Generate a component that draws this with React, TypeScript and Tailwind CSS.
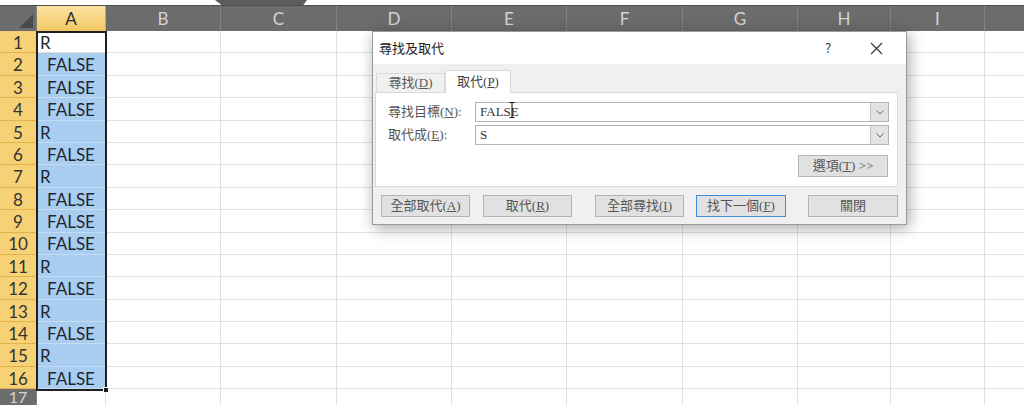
import React from "react";

const cols = [
   { label: "A", cls: "w-[69px]" },
   { label: "B", cls: "w-[115px]" },
   { label: "C", cls: "w-[116px]" },
   { label: "D", cls: "w-[115px]" },
   { label: "E", cls: "w-[115px]" },
   { label: "F", cls: "w-[116px]" },
   { label: "G", cls: "w-[115px]" },
   { label: "H", cls: "w-[93px]" },
   { label: "I", cls: "w-[94px]" },
   { label: "", cls: "w-[60px]" },
];

const values = [
   "R", "FALSE", "FALSE", "FALSE", "R", "FALSE", "R", "FALSE",
   "FALSE", "FALSE", "R", "FALSE", "R", "FALSE", "R", "FALSE",
];

const cellFont = "font-['Lato','Liberation_Sans',sans-serif]";
const dlgFont = "font-['Liberation_Serif','Noto_Sans_CJK_TC',serif]";

function Btn({
   children,
   className = "",
   focused = false,
}: {
   children: React.ReactNode;
   className?: string;
   focused?: boolean;
}) {
   return (
      <div
         className={
            "h-[22px] w-[89px] flex items-center justify-center bg-[#e1e1e1] text-[13px] text-[#555] border " +
            (focused ? "border-[#3c8fdc]" : "border-[#b4b4b4]") +
            " " +
            className
         }
      >
         {children}
      </div>
   );
}

function Chevron() {
   return (
      <div className="w-[18px] h-full bg-[#e3e3e3] border-l border-[#c4c4c4] flex items-center justify-center">
         <svg width="8" height="5" viewBox="0 0 8 5">
            <path d="M0.5 0.5 L4 4 L7.5 0.5" fill="none" stroke="#666" strokeWidth="1" />
         </svg>
      </div>
   );
}

function FindReplaceDialog() {
   return (
      <div
         className={
            "absolute left-[372px] top-[31px] w-[535px] h-[194px] border border-[#9a9a9a] bg-[#f0f0f0] shadow-[2px_3px_14px_rgba(0,0,0,0.35)] flex flex-col " +
            dlgFont
         }
      >
         {/* title bar */}
         <div className="h-[32px] bg-white flex items-center px-[6px] text-[13px] text-[#222] font-['Noto_Sans_CJK_TC',sans-serif]">
            <span className="flex-1">尋找及取代</span>
            <span className="w-[20px] text-center text-[#333] mr-[32px]">?</span>
            <svg width="13" height="13" viewBox="0 0 13 13" className="mr-[17px]">
               <path d="M1 1 L12 12 M12 1 L1 12" stroke="#333" strokeWidth="1.1" />
            </svg>
         </div>
         {/* tabs */}
         <div className="h-[28px] flex items-end pl-[3px] pt-[6px]">
            <div className="h-[19px] w-[69px] border border-b-0 border-[#dadada] flex items-center justify-center text-[13px] text-[#555]">
               尋找(<u>D</u>)
            </div>
            <div className="h-[23px] w-[66px] bg-white border border-b-0 border-[#dadada] flex items-center justify-center text-[13px] text-[#444] relative top-[1px] z-10">
               取代(<u>P</u>)
            </div>
         </div>
         {/* panel */}
         <div className="ml-[2px] w-[523px] h-[95px] bg-white border border-[#dadada] pt-[9px] pl-[12px] flex flex-col gap-[3px] text-[13px] text-[#555]">
            <div className="flex items-center h-[20px]">
               <span className="w-[87px]">
                  尋找目標(<u>N</u>):
               </span>
               <div className="w-[414px] h-[20px] border border-[#b4b4b4] flex items-center">
                  <span className="flex-1 pl-[4px] text-[#333] relative">
                     FALSE
                     <svg
                        width="6"
                        height="16"
                        viewBox="0 0 6 16"
                        className="absolute left-[33px] top-[0px]"
                     >
                        <path d="M0.5 0.5 H5.5 M3 0.5 V15.5 M0.5 15.5 H5.5" stroke="#111" strokeWidth="1" fill="none" />
                     </svg>
                  </span>
                  <Chevron />
               </div>
            </div>
            <div className="flex items-center h-[20px]">
               <span className="w-[87px]">
                  取代成(<u>E</u>):
               </span>
               <div className="w-[414px] h-[20px] border border-[#b4b4b4] flex items-center">
                  <span className="flex-1 pl-[4px] text-[#333]">S</span>
                  <Chevron />
               </div>
            </div>
            <div className="flex justify-end pr-[9px] mt-[7px]">
               <Btn className="w-[90px]">
                  選項(<u>T</u>) &gt;&gt;
               </Btn>
            </div>
         </div>
         {/* buttons */}
         <div className="flex items-center mt-[8px] pl-[8px]">
            <Btn>
               全部取代(<u>A</u>)
            </Btn>
            <Btn className="ml-[13px]">
               取代(<u>R</u>)
            </Btn>
            <Btn className="ml-[23px]">
               全部尋找(<u>I</u>)
            </Btn>
            <Btn className="ml-[12px] w-[90px]" focused>
               找下一個(<u>F</u>)
            </Btn>
            <Btn className="ml-[22px] w-[90px]">關閉</Btn>
         </div>
      </div>
   );
}

export default function App() {
   return (
      <div className={"w-[1024px] h-[407px] overflow-hidden relative bg-white " + cellFont}>
         {/* top strip */}
         <div className="h-[5px] bg-white relative">
            <div className="absolute left-[215px] top-0 w-[92px] h-[5px] bg-[#5c5c5c] [clip-path:polygon(0_0,100%_0,96%_100%,7%_100%)]" />
         </div>
         {/* column headers */}
         <div className="h-[26px] flex bg-[#6c6c6c] border-t border-[#4f4f4f]">
            <div className="w-[37px] shrink-0 relative border-r border-[#828282]">
               <svg width="14" height="14" viewBox="0 0 14 14" className="absolute right-[3px] bottom-[3px]">
                  <path d="M14 0 L14 14 L0 14 Z" fill="#4a4a4a" />
               </svg>
            </div>
            {cols.map((c) => (
               <div
                  key={c.label + c.cls}
                  className={
                     c.cls +
                     " shrink-0 flex items-center justify-center text-[17px] border-r " +
                     (c.label === "A"
                        ? "bg-gradient-to-b from-[#fbe2a0] to-[#f3c862] text-[#2d2d2d] border-[#d9a940]"
                        : "text-[#d4d4d4] border-[#828282]")
                  }
               >
                  {c.label}
               </div>
            ))}
         </div>
         {/* rows */}
         {values.map((v, i) => (
            <div key={i} className="h-[22.4px] flex">
               <div className="w-[37px] shrink-0 bg-[#f7d175] border-b border-r border-[#e2b34d] flex items-center justify-center pt-[2px] text-[17px] text-[#333]">
                  {i + 1}
               </div>
               {cols.map((c, j) => (
                  <div
                     key={j}
                     className={
                        c.cls +
                        " shrink-0 border-r border-b flex items-center pt-[2px] text-[17px] text-[#1e2630] " +
                        (j === 0
                           ? i === 0
                              ? "bg-white border-[#dcdcdc] pl-[3px]"
                              : "bg-[#a8cdf0] border-[#c4dcf3] " + (v === "R" ? "pl-[3px]" : "justify-center")
                           : "border-[#e0e0e0]")
                     }
                  >
                     {j === 0 ? v : null}
                  </div>
               ))}
            </div>
         ))}
         <div className="h-[16px] flex">
            <div className="w-[37px] shrink-0 bg-[#6c6c6c] border-r border-[#828282] flex items-center justify-center text-[16px] text-[#d4d4d4] leading-[16px]">
               17
            </div>
            {cols.map((c, j) => (
               <div key={j} className={c.cls + " shrink-0 border-r border-[#e0e0e0]"} />
            ))}
         </div>
         {/* selection */}
         <div className="absolute left-[36px] top-[31px] w-[71px] h-[360px] border-2 border-[#1f1f1f] pointer-events-none" />
         <div className="absolute left-[103px] top-[387px] w-[6px] h-[6px] bg-[#1f1f1f] border border-white" />
         <FindReplaceDialog />
      </div>
   );
}
